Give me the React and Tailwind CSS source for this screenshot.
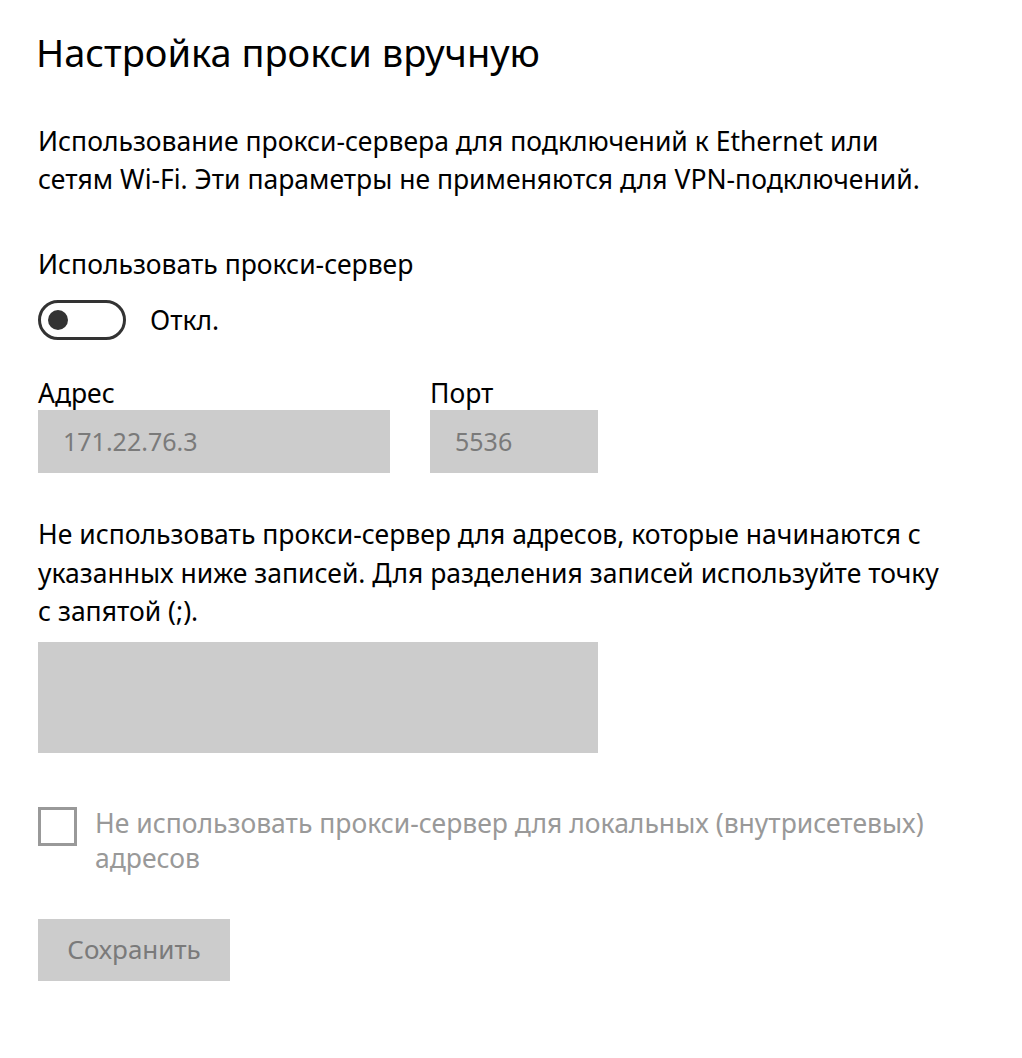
import React from "react";

const App = () => {
  return (
    <div
      className="min-h-screen w-[1022px] bg-white pl-[38px] pt-[30px] text-black"
      style={{ fontFamily: "'Noto Sans', 'Open Sans', sans-serif" }}
    >
      {/* Title */}
      <h1 className="-ml-[2px] text-[38px] leading-[44px] font-normal">Настройка прокси вручную</h1>

      {/* Description */}
      <p className="mt-[48px] w-[970px] text-[26.5px] leading-[38px]">
        Использование прокси-сервера для подключений к Ethernet или
        <br />
        сетям Wi-Fi. Эти параметры не применяются для VPN-подключений.
      </p>

      {/* Toggle */}
      <div className="mt-[51px] text-[26.5px] leading-[30px]">Использовать прокси-сервер</div>
      <div className="mt-[21px] flex items-center gap-[24px]">
        <div className="flex h-[40px] w-[88px] items-center rounded-full border-[3px] border-[#333333] pl-[7px]">
          <div className="h-[20px] w-[20px] rounded-full bg-[#333333]" />
        </div>
        <span className="text-[26.5px] leading-[30px]">Откл.</span>
      </div>

      {/* Address / Port */}
      <div className="mt-[38px] flex gap-[40px]">
        <div className="flex flex-col">
          <label className="text-[26.5px] leading-[30px]">Адрес</label>
          <div className="mt-[2px] flex h-[63px] w-[352px] items-center bg-[#cccccc] px-[25px] text-[25px] text-[#7a7a7a]">
            171.22.76.3
          </div>
        </div>
        <div className="flex flex-col">
          <label className="text-[26.5px] leading-[30px]">Порт</label>
          <div className="mt-[2px] flex h-[63px] w-[168px] items-center bg-[#cccccc] px-[25px] text-[25px] text-[#7a7a7a]">
            5536
          </div>
        </div>
      </div>

      {/* Exceptions */}
      <p className="mt-[42px] w-[970px] text-[26.5px] leading-[38.5px]">
        Не использовать прокси-сервер для адресов, которые начинаются с
        <br />
        указанных ниже записей. Для разделения записей используйте точку
        <br />
        с запятой (;).
      </p>
      <div className="mt-[11px] h-[111px] w-[560px] bg-[#cccccc]" />

      {/* Checkbox */}
      <div className="mt-[54px] flex items-start gap-[18px]">
        <div className="h-[39px] w-[39px] shrink-0 border-[3px] border-[#999999]" />
        <span className="-mt-[1px] text-[26.5px] leading-[35px] text-[#999999]">
          Не использовать прокси-сервер для локальных (внутрисетевых)
          <br />
          адресов
        </span>
      </div>

      {/* Save */}
      <button className="mt-[43px] flex h-[62px] w-[192px] items-center justify-center bg-[#cccccc] text-[26px] text-[#7a7a7a]">
        Сохранить
      </button>
    </div>
  );
};

export default App;
